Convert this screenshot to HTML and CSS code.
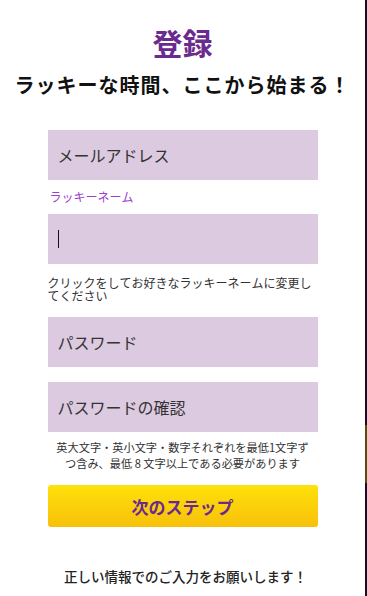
FILE: index.html
```html
<!DOCTYPE html>
<html lang="ja">
<head>
    <meta charset="UTF-8">
    <meta name="viewport" content="width=device-width, initial-scale=1.0">
    <title>登録</title>
    <link rel="stylesheet" href="styles.css">
</head>
<body>
    <div class="panel">
        <h1 class="title">登録</h1>
        <p class="subtitle">ラッキーな時間、ここから始まる！</p>

        <form class="form" onsubmit="return false">
            <input class="field" type="email" placeholder="メールアドレス">

            <label class="label" for="luckyName">ラッキーネーム</label>
            <div class="field-wrap is-focused">
                <input class="field" id="luckyName" type="text">
            </div>
            <p class="help">クリックをしてお好きなラッキーネームに変更してください</p>

            <input class="field field-pass" type="password" placeholder="パスワード">
            <input class="field field-confirm" type="password" placeholder="パスワードの確認">
            <p class="note">英大文字・英小文字・数字それぞれを最低1文字ずつ含み、最低 8 文字以上である必要があります</p>

            <button class="button" type="submit">次のステップ</button>
        </form>

        <p class="footer">正しい情報でのご入力をお願いします！</p>
    </div>
</body>
</html>
```

FILE: styles.css
```css
html, body {
    margin: 0;
    height: 100%;
}
body {
    font-family: "Noto Sans CJK JP", "Noto Sans", sans-serif;
    font-kerning: none;
    color: #222;
    background: linear-gradient(to bottom, #1c0b27 0, #1c0b27 425px, #5a4c08 425px, #5a4c08 483px, #1c0b27 483px);
}
.panel {
    width: 365px;
    min-height: 100%;
    background-color: #fff;
    padding-top: 24px;
    box-sizing: border-box;
}
.title {
    margin: 0;
    text-align: center;
    font-size: 30px;
    line-height: 36px;
    font-weight: bold;
    color: #6b2a8e;
}
.subtitle {
    margin: 13px 0 0;
    text-align: center;
    font-size: 20px;
    line-height: 24px;
    letter-spacing: 1px;
    font-weight: bold;
    color: #111;
}
.form {
    width: 270px;
    margin: 33px auto 0;
    display: flex;
    flex-direction: column;
}
.field {
    display: block;
    width: 100%;
    height: 50px;
    box-sizing: border-box;
    padding: 0 10px;
    border: none;
    outline: none;
    background-color: #dccae0;
    font-family: inherit;
    font-kerning: none;
    font-size: 16px;
    color: #333;
}
.field::placeholder {
    color: #333;
}
.field-wrap {
    position: relative;
}
.is-focused::after {
    content: "";
    position: absolute;
    left: 10px;
    top: 16px;
    width: 1px;
    height: 18px;
    background-color: #111;
}
.label {
    margin: 9px 0 9px 2px;
    font-size: 12px;
    line-height: 16px;
    color: #9b3fcc;
}
.help {
    margin: 12px 0 0;
    font-size: 12px;
    line-height: 13px;
    color: #333;
}
.field-pass {
    margin-top: 15px;
}
.field-confirm {
    margin-top: 15px;
}
.note {
    margin: 7px 0 0;
    padding: 0 6px;
    text-align: center;
    font-size: 11.2px;
    line-height: 16px;
    color: #333;
}
.button {
    margin-top: 14px;
    height: 42px;
    border: none;
    border-radius: 3px;
    background: linear-gradient(to bottom, #ffe10a, #f7c00b);
    font-family: inherit;
    font-kerning: none;
    font-size: 17px;
    font-weight: bold;
    color: #6b2a8e;
    cursor: pointer;
}
.footer {
    margin: 39px 0 0;
    padding-left: 6px;
    text-align: center;
    font-size: 13.5px;
    line-height: 20px;
    font-weight: 500;
    color: #222;
}
```
